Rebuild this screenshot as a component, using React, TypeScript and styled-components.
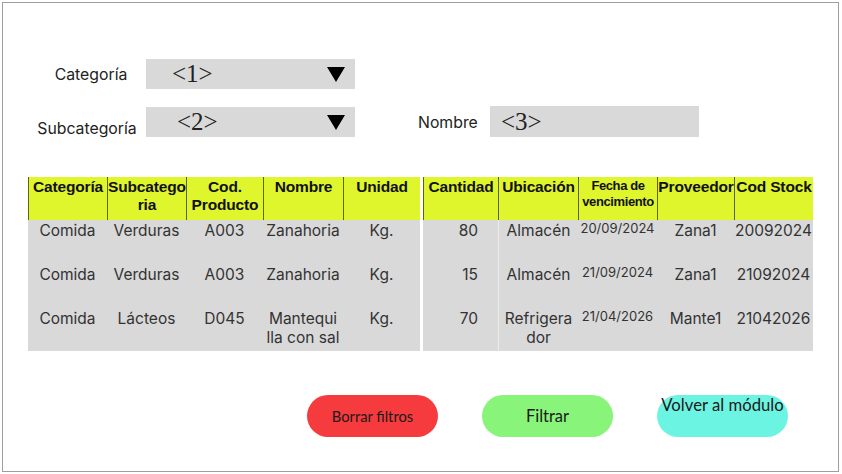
import React from "react";
import styled, { createGlobalStyle } from "styled-components";

const Global = createGlobalStyle`
  html, body { margin: 0; padding: 0; background: #ffffff; }
  body { font-family: "Liberation Sans", Arial, sans-serif; }
`;

const Frame = styled.div`
  box-sizing: border-box;
  margin: 2px 0 0 2px;
  width: 837px;
  height: 470px;
  border: 1px solid #9e9e9e;
  padding: 56px 0 0 25px;
  display: flex;
  flex-direction: column;
`;

const Filters = styled.div`
  display: grid;
  grid-template-columns: 118px 209px 63px 72px 209px;
  grid-template-rows: 30px 30px;
  row-gap: 18px;
`;

const Label = styled.div<{ $col: number; $row: number; $dx?: number; $dy?: number; $align?: string }>`
  grid-column: ${(p) => p.$col};
  grid-row: ${(p) => p.$row};
  font-family: "Inter", "Liberation Sans", sans-serif;
  font-size: 15.8px;
  color: #222;
  display: flex;
  align-items: center;
  justify-content: ${(p) => p.$align ?? "center"};
  padding-left: ${(p) => p.$dx ?? 0}px;
  padding-top: ${(p) => p.$dy ?? 0}px;
`;

const Box = styled.div<{ $col: number; $row: number; $dy?: number }>`
  grid-column: ${(p) => p.$col};
  grid-row: ${(p) => p.$row};
  background: #d9d9d9;
  display: flex;
  align-items: center;
  justify-content: space-between;
  padding: 0 10px 0 ${(p) => (p.$col === 2 ? 26 : 11)}px;
  margin-top: ${(p) => p.$dy ?? 0}px;
`;

const Placeholder = styled.span<{ $dx?: number }>`
  font-family: "Liberation Serif", "Times New Roman", serif;
  font-size: 25px;
  line-height: 30px;
  color: #222;
  margin-left: ${(p) => p.$dx ?? 0}px;
`;

const Caret = () => (
  <svg width="18" height="16" viewBox="0 0 18 16">
    <polygon points="0,1 18,1 9,16" fill="#000" />
  </svg>
);

const Tables = styled.div`
  display: flex;
  gap: 3px;
  margin-top: 40px;
`;

const Table = styled.div<{ $cols: string }>`
  display: grid;
  grid-template-columns: ${(p) => p.$cols};
  grid-template-rows: 43px 44px 44px 43px;
`;

const Head = styled.div<{ $small?: boolean }>`
  background: #dff52c;
  border-left: 1px solid #5e6400;
  font-family: "Liberation Sans", Arial, sans-serif;
  font-weight: bold;
  font-size: ${(p) => (p.$small ? "13px" : "15.5px")};
  line-height: ${(p) => (p.$small ? "16px" : "18px")};
  letter-spacing: ${(p) => (p.$small ? "-0.4px" : "-0.15px")};
  padding-top: 1px;
  color: #111;
  text-align: center;
  overflow-wrap: anywhere;
`;

const Cell = styled.div<{ $right?: boolean; $small?: boolean; $divider?: boolean }>`
  background: #d9d9d9;
  font-family: "Inter", "Liberation Sans", sans-serif;
  font-size: ${(p) => (p.$small ? "13px" : "15.5px")};
  line-height: ${(p) => (p.$small ? "17px" : "19px")};
  padding: ${(p) => (p.$small ? 0 : 1)}px ${(p) => (p.$right ? 20 : 0)}px 0 0;
  color: #333;
  text-align: ${(p) => (p.$right ? "right" : "center")};
  overflow-wrap: anywhere;
  border-left: ${(p) => (p.$divider ? "1px solid #ececec" : "none")};
`;

const Buttons = styled.div`
  display: flex;
  gap: 44px;
  margin: 44px 0 0 279px;
`;

const Button = styled.div<{ $bg: string; $size: number; $top?: boolean }>`
  width: 131px;
  height: 42px;
  border-radius: 21px;
  background: ${(p) => p.$bg};
  display: flex;
  justify-content: center;
  align-items: ${(p) => (p.$top ? "flex-start" : "center")};
  font-family: "Lato", "Noto Sans", sans-serif;
  font-size: ${(p) => p.$size}px;
  line-height: 20px;
  color: #1a1a1a;
  white-space: nowrap;
`;

const leftRows = [
  ["Comida", "Verduras", "A003", "Zanahoria", "Kg."],
  ["Comida", "Verduras", "A003", "Zanahoria", "Kg."],
  ["Comida", "Lácteos", "D045", "Mantequi\u200Blla con sal", "Kg."],
];

const rightRows = [
  ["80", "Almacén", "20/09/2024", "Zana1", "20092024"],
  ["15", "Almacén", "21/09/2024", "Zana1", "21092024"],
  ["70", "Refrigera\u200Bdor", "21/04/2026", "Mante1", "21042026"],
];

export default function App() {
  return (
    <>
      <Global />
      <Frame>
        <Filters>
          <Label $col={1} $row={1} $dx={8}>Categoría</Label>
          <Box $col={2} $row={1}>
            <Placeholder>&lt;1&gt;</Placeholder>
            <Caret />
          </Box>
          <Label $col={1} $row={2} $dy={12}>Subcategoría</Label>
          <Box $col={2} $row={2}>
            <Placeholder $dx={5}>&lt;2&gt;</Placeholder>
            <Caret />
          </Box>
          <Label $col={4} $row={2} $align="flex-start" $dy={-2}>Nombre</Label>
          <Box $col={5} $row={2} $dy={-1}>
            <Placeholder>&lt;3&gt;</Placeholder>
          </Box>
        </Filters>

        <Tables>
          <Table $cols="79px 79px 77px 80px 77px">
            {["Categoría", "Subcategoria", "Cod. Producto", "Nombre", "Unidad"].map((h) => (
              <Head key={h}>{h}</Head>
            ))}
            {leftRows.map((r, i) =>
              r.map((c, j) => <Cell key={`${i}-${j}`}>{c}</Cell>)
            )}
          </Table>
          <Table $cols="75px 80px 79px 77px 79px">
            <Head>Cantidad</Head>
            <Head>Ubicación</Head>
            <Head $small>Fecha de vencimiento</Head>
            <Head>Proveedor</Head>
            <Head>Cod Stock</Head>
            {rightRows.map((r, i) =>
              r.map((c, j) => (
                <Cell
                  key={`${i}-${j}`}
                  $right={j === 0}
                  $small={j === 2}
                  $divider={j === 1}
                >
                  {c}
                </Cell>
              ))
            )}
          </Table>
        </Tables>

        <Buttons>
          <Button $bg="#f53b3d" $size={14.7}>Borrar filtros</Button>
          <Button $bg="#88f47a" $size={16.5}>Filtrar</Button>
          <Button $bg="#6cf4e3" $size={16.7} $top>Volver al módulo</Button>
        </Buttons>
      </Frame>
    </>
  );
}
